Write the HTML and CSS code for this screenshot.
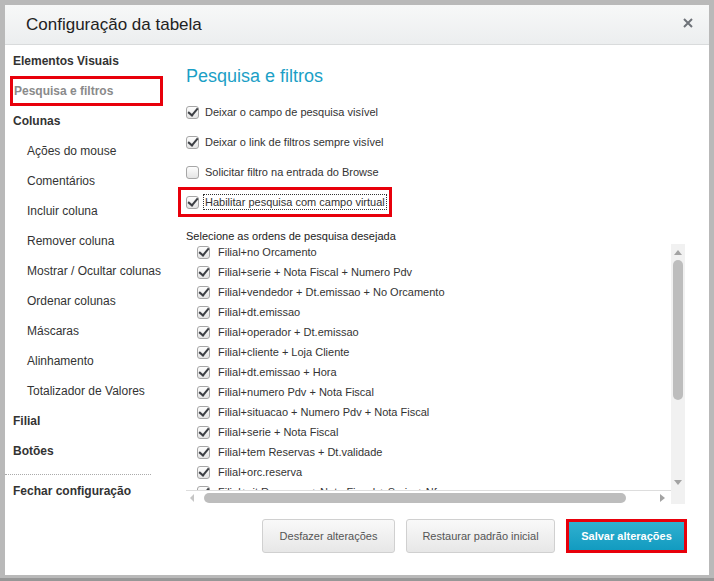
FILE: index.html
```html
<!DOCTYPE html>
<html lang="pt">
<head>
    <meta charset="UTF-8">
    <title>Configuração da tabela</title>
    <link rel="stylesheet" href="styles.css">
</head>
<body>
    <div class="dialog">
        <div class="dialog-header">
            <h1>Configuração da tabela</h1>
            <span class="close">
                <svg width="10" height="10" viewBox="0 0 10 10"><path d="M1 1L9 9M9 1L1 9" stroke="#6f7379" stroke-width="2"/></svg>
            </span>
        </div>
        <div class="dialog-body">
            <ul class="nav">
                <li class="nav-item">Elementos Visuais</li>
                <li class="nav-item active">Pesquisa e filtros</li>
                <li class="nav-item">Colunas</li>
                <li class="nav-sub">Ações do mouse</li>
                <li class="nav-sub">Comentários</li>
                <li class="nav-sub">Incluir coluna</li>
                <li class="nav-sub">Remover coluna</li>
                <li class="nav-sub">Mostrar / Ocultar colunas</li>
                <li class="nav-sub">Ordenar colunas</li>
                <li class="nav-sub">Máscaras</li>
                <li class="nav-sub">Alinhamento</li>
                <li class="nav-sub">Totalizador de Valores</li>
                <li class="nav-item">Filial</li>
                <li class="nav-item">Botões</li>
                <li class="nav-sep"></li>
                <li class="nav-item">Fechar configuração</li>
            </ul>

            <div class="content">
                <h2>Pesquisa e filtros</h2>
                <div class="option"><span class="cb on"></span><span>Deixar o campo de pesquisa visível</span></div>
                <div class="option"><span class="cb on"></span><span>Deixar o link de filtros sempre visível</span></div>
                <div class="option"><span class="cb"></span><span>Solicitar filtro na entrada do Browse</span></div>
                <div class="option marked"><span class="cb on"></span><span class="focused">Habilitar pesquisa com campo virtual</span></div>

                <p class="list-title">Selecione as ordens de pesquisa desejada</p>
                <div class="listbox">
                    <div class="list-view">
                        <div class="list-item"><span class="cb on"></span>Filial+no Orcamento</div>
                        <div class="list-item"><span class="cb on"></span>Filial+serie + Nota Fiscal + Numero Pdv</div>
                        <div class="list-item"><span class="cb on"></span>Filial+vendedor + Dt.emissao + No Orcamento</div>
                        <div class="list-item"><span class="cb on"></span>Filial+dt.emissao</div>
                        <div class="list-item"><span class="cb on"></span>Filial+operador + Dt.emissao</div>
                        <div class="list-item"><span class="cb on"></span>Filial+cliente + Loja Cliente</div>
                        <div class="list-item"><span class="cb on"></span>Filial+dt.emissao + Hora</div>
                        <div class="list-item"><span class="cb on"></span>Filial+numero Pdv + Nota Fiscal</div>
                        <div class="list-item"><span class="cb on"></span>Filial+situacao + Numero Pdv + Nota Fiscal</div>
                        <div class="list-item"><span class="cb on"></span>Filial+serie + Nota Fiscal</div>
                        <div class="list-item"><span class="cb on"></span>Filial+tem Reservas + Dt.validade</div>
                        <div class="list-item"><span class="cb on"></span>Filial+orc.reserva</div>
                        <div class="list-item"><span class="cb on"></span>Filial+sit.Reservas + Nota Fiscal + Serie + Nf</div>
                        <div class="list-item"><span class="cb on"></span>Filial+dt.validade</div>
                    </div>
                    <div class="vscroll">
                        <span class="arrow up"></span>
                        <span class="thumb"></span>
                        <span class="arrow down"></span>
                    </div>
                    <div class="hscroll">
                        <span class="arrow left"></span>
                        <span class="thumb"></span>
                        <span class="arrow right"></span>
                    </div>
                    <div class="corner"></div>
                </div>

                <div class="actions">
                    <button class="btn undo">Desfazer alterações</button>
                    <button class="btn reset">Restaurar padrão inicial</button>
                    <button class="btn primary">Salvar alterações</button>
                </div>
            </div>
        </div>
    </div>
</body>
</html>
```

FILE: styles.css
```css
body {
    margin: 0;
    padding: 5px 0 0 5px;
    background: linear-gradient(#b9b9b9 578px, #979797 578px);
    font-family: "Liberation Sans", Arial, sans-serif;
    color: #333;
    height: 581px;
    box-sizing: border-box;
    overflow: hidden;
}

.dialog {
    width: 704px;
    height: 570px;
    background-color: #fff;
    display: flex;
    flex-direction: column;
}

.dialog-header {
    height: 39px;
    border-bottom: 1px solid #d9dbdc;
    background: linear-gradient(#f7f8f8, #eceeef);
    display: flex;
    align-items: center;
    justify-content: space-between;
    padding: 0 16px 0 21px;
}

.dialog-header h1 {
    margin: 0;
    font-size: 17px;
    font-weight: normal;
    color: #222;
}

.close {
    display: flex;
    margin-top: -3px;
}

.dialog-body {
    flex: 1;
    display: flex;
}

/* menu lateral */
.nav {
    list-style: none;
    margin: 0;
    padding: 1px 0 0;
    width: 173px;
    font-size: 12px;
}

.nav-item,
.nav-sub {
    height: 30px;
    line-height: 30px;
    padding-left: 8px;
    white-space: nowrap;
}

.nav-item {
    font-weight: bold;
    color: #333;
}

.nav-sub {
    padding-left: 22px;
}

.nav-item.active {
    color: #8a8a8a;
    width: 153px;
    margin-left: 5px;
    padding-left: 1px;
    border: 3px solid #e8000b;
    box-sizing: border-box;
    line-height: 24px;
}

.nav-sep {
    height: 0;
    margin: 8px 27px 1px 0;
    border-top: 1px dotted #aaa;
}

/* conteudo */
.content {
    flex: 1;
    padding: 21px 22px 0 8px;
    font-size: 11px;
}

.content h2 {
    margin: 0 0 11px;
    font-size: 18px;
    line-height: 20px;
    font-weight: normal;
    color: #1b9fc6;
}

.option {
    height: 30px;
    display: flex;
    align-items: center;
    gap: 6px;
}

.option.marked {
    width: 214px;
    margin-left: -8px;
    padding-left: 5px;
    border: 3px solid #e8000b;
    box-sizing: border-box;
    gap: 4px;
}

.focused {
    border: 1px dotted #333;
    padding: 1px 1px;
}

.cb {
    width: 13px;
    height: 13px;
    flex-shrink: 0;
    border: 1px solid #a6a6a6;
    border-radius: 3px;
    background: linear-gradient(#fdfdfd, #e4e4e4);
    box-sizing: border-box;
    position: relative;
}

.cb.on::after {
    content: "";
    position: absolute;
    left: 3px;
    top: -1px;
    width: 4px;
    height: 8px;
    border-right: 2.5px solid #3c3f44;
    border-bottom: 2.5px solid #3c3f44;
    transform: rotate(40deg);
}

.list-title {
    margin: 12px 0 0;
    line-height: 14px;
    color: #222;
}

.listbox {
    margin-top: 1px;
    width: 499px;
    height: 260px;
    display: grid;
    grid-template-columns: 1fr 14px;
    grid-template-rows: 1fr 14px;
}

.list-view {
    overflow: hidden;
    padding-left: 11px;
    margin-top: -2px;
}

.list-item {
    height: 20px;
    display: flex;
    align-items: center;
    gap: 8px;
    white-space: nowrap;
    color: #333;
}

.vscroll,
.hscroll,
.corner {
    background-color: #f1f1f1;
}

.vscroll {
    display: flex;
    flex-direction: column;
    align-items: center;
    padding: 6px 0 5px;
}

.vscroll .thumb {
    width: 10px;
    height: 140px;
    margin: 5px 0 auto;
    border-radius: 5px;
    background-color: #bdbdbd;
}

.hscroll {
    display: flex;
    align-items: center;
    padding: 0 6px 0 4px;
    border-top: 1px solid #ddd;
    background-color: #fff;
}

.hscroll .thumb {
    width: 422px;
    height: 10px;
    margin: 0 auto 0 10px;
    border-radius: 5px;
    background-color: #bdbdbd;
}

.arrow {
    width: 0;
    height: 0;
    border: 4px solid transparent;
}

.arrow.up {
    border-top: 0;
    border-bottom: 5px solid #a3a3a3;
}

.arrow.down {
    border-bottom: 0;
    border-top: 5px solid #a3a3a3;
}

.arrow.left {
    border-left: 0;
    border-right: 4px solid #c6c6c6;
}

.arrow.right {
    border-right: 0;
    border-left: 5px solid #a3a3a3;
}

/* botoes */
.actions {
    margin-top: 15px;
    display: flex;
    justify-content: flex-end;
    gap: 11px;
}

.btn {
    height: 34px;
    padding: 0;
    font-family: inherit;
    font-size: 11px;
    color: #555;
    background: linear-gradient(#f9f9f9, #e7e7e7);
    border: 1px solid #d0d0d0;
    border-radius: 3px;
}

.btn.undo {
    width: 133px;
}

.btn.reset {
    width: 149px;
}

.btn.primary {
    width: 121px;
    color: #fff;
    font-weight: bold;
    background: linear-gradient(#30b0d0, #129bc0);
    border: 3px solid #e8000b;
    border-radius: 0;
}
```
